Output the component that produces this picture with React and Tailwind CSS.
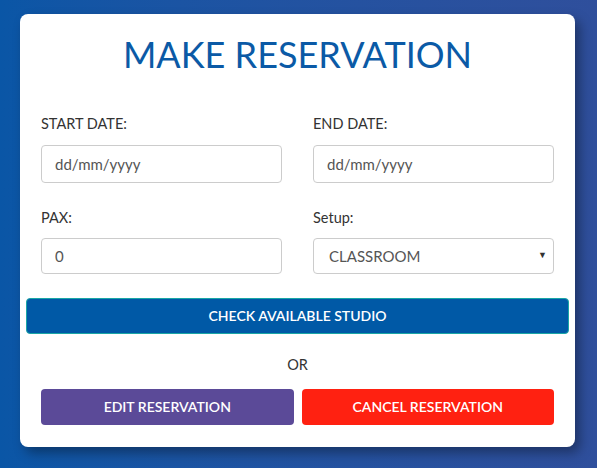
import { useState } from 'react';

export default function App() {
    const [pax, setPax] = useState('0');
    const [setup, setSetup] = useState('CLASSROOM');

    return (
        <div className="min-h-screen w-full bg-gradient-to-r from-[#0a56a6] to-[#2f4f9c] px-[20px] pt-[14px] pb-[21px] font-['Lato','Liberation_Sans',sans-serif]">
            <div className="w-[555px] rounded-lg bg-white px-[21px] pt-[18px] pb-[22px] shadow-[5px_6px_12px_rgba(0,0,0,0.35)]">

                {/* Title */}
                <h1 className="text-center text-[36px] leading-[45px] font-normal text-[#0b5aa6]">
                    MAKE RESERVATION
                </h1>

                {/* Dates */}
                <div className="mt-[37px] grid grid-cols-2 gap-x-[31px]">
                    <div>
                        <label className="block text-[14.5px] leading-5 text-[#333]">START DATE:</label>
                        <input
                            type="text"
                            placeholder="dd/mm/yyyy"
                            className="mt-[11px] block h-[38px] w-full rounded border border-[#ccc] px-[13px] text-[15px] text-[#555] outline-none placeholder:text-[#555]"
                        />
                    </div>
                    <div>
                        <label className="block text-[14.5px] leading-5 text-[#333]">END DATE:</label>
                        <input
                            type="text"
                            placeholder="dd/mm/yyyy"
                            className="mt-[11px] block h-[38px] w-full rounded border border-[#ccc] px-[13px] text-[15px] text-[#555] outline-none placeholder:text-[#555]"
                        />
                    </div>
                </div>

                {/* Pax & Setup */}
                <div className="mt-[25px] grid grid-cols-2 gap-x-[31px]">
                    <div>
                        <label className="block text-[14.5px] leading-5 text-[#333]">PAX:</label>
                        <input
                            type="text"
                            value={pax}
                            onChange={(e) => setPax(e.target.value)}
                            className="mt-[10px] block h-[36px] w-full rounded border border-[#ccc] px-[13px] text-[15px] text-[#555] outline-none"
                        />
                    </div>
                    <div>
                        <label className="block text-[14.5px] leading-5 text-[#333]">Setup:</label>
                        <div className="relative mt-[10px]">
                            <select
                                value={setup}
                                onChange={(e) => setSetup(e.target.value)}
                                className="block h-[36px] w-full appearance-none rounded border border-[#ccc] bg-white px-[15px] text-[15px] text-[#555] outline-none"
                            >
                                <option>CLASSROOM</option>
                                <option>THEATRE</option>
                                <option>BOARDROOM</option>
                            </select>
                            <span className="pointer-events-none absolute right-[7px] top-[10px] text-[9px] text-[#333]">▼</span>
                        </div>
                    </div>
                </div>

                {/* Check */}
                <button
                    type="button"
                    className="-mx-[15px] mt-[24px] block h-[36px] w-[543px] rounded border border-[#1aa6a6] bg-[#0059a6] text-sm font-semibold text-white"
                >
                    CHECK AVAILABLE STUDIO
                </button>

                <p className="mt-[21px] text-center text-[14.5px] leading-5 text-[#333]">OR</p>

                {/* Edit / Cancel */}
                <div className="mt-[14px] grid grid-cols-2 gap-x-[8px]">
                    <button type="button" className="h-[36px] rounded bg-[#5b4a98] text-sm font-semibold text-white">
                        EDIT RESERVATION
                    </button>
                    <button type="button" className="h-[36px] rounded bg-[#ff2111] text-sm font-semibold text-white">
                        CANCEL RESERVATION
                    </button>
                </div>
            </div>
        </div>
    );
}
